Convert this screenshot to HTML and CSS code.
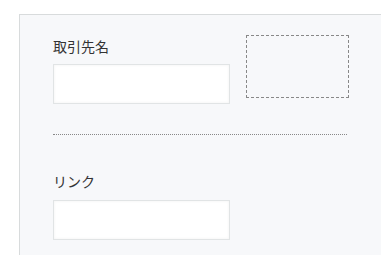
FILE: index.html
```html
<!DOCTYPE html>
<html lang="ja">
<head>
    <meta charset="UTF-8">
    <meta name="viewport" content="width=device-width, initial-scale=1.0">
    <title>取引先</title>
    <link rel="stylesheet" href="styles.css">
</head>
<body>
    <div class="panel">
        <div class="row">
            <div class="field">
                <label class="label" for="partner">取引先名</label>
                <input class="text-input" id="partner" type="text">
            </div>
            <div class="drop-box"></div>
        </div>

        <hr class="divider">

        <div class="field field-link">
            <label class="label" for="link">リンク</label>
            <input class="text-input" id="link" type="text">
        </div>
    </div>
</body>
</html>
```

FILE: styles.css
```css
html, body {
    margin: 0;
    padding: 0;
    overflow: hidden;
    background: #fff;
}

body {
    padding: 14px 0 0 19px;
    font-family: "Noto Sans CJK JP", "Noto Sans", sans-serif;
    color: #333;
}

/* panel runs off the right and bottom edge of the window */
.panel {
    width: 362px;
    height: 241px;
    box-sizing: border-box;
    background: #f7f8fa;
    border: 1px solid #d8dbdc;
    border-right: none;
    border-bottom: none;
    padding: 21px 0 0 33px;
}

.row {
    display: flex;
    align-items: flex-start;
    gap: 16px;
}

.field {
    display: flex;
    flex-direction: column;
}

.label {
    font-size: 14px;
    line-height: 20px;
    margin-bottom: 8px;
}

.text-input {
    width: 177px;
    height: 40px;
    box-sizing: border-box;
    margin: 0;
    border: 1px solid #e1e4e5;
    background: #fff;
    box-shadow: inset 0 0 3px rgba(0,0,0,0.06);
    outline: none;
}

.drop-box {
    width: 103px;
    height: 63px;
    box-sizing: border-box;
    margin-top: -1px;
    border: 1px dashed #888;
}

.divider {
    width: 294px;
    margin: 30px 0 0 0;
    border: none;
    border-top: 1px dotted #888;
    height: 0;
}

.field-link {
    margin-top: 36px;
}

.field-link .label {
    margin-bottom: 9px;
}
```
